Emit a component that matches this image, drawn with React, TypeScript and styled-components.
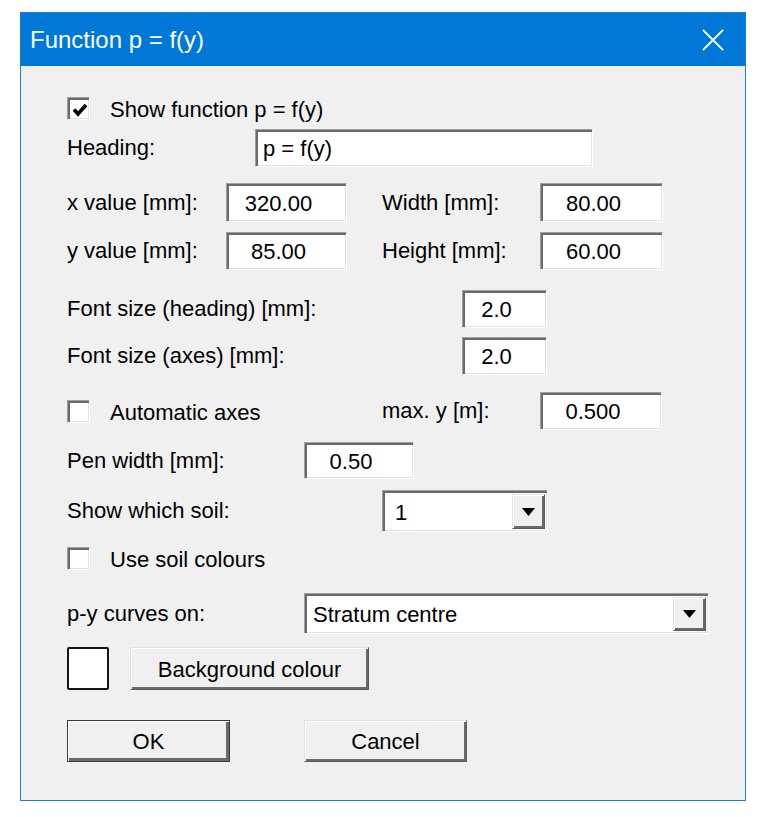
import styled, { createGlobalStyle } from 'styled-components';

const GlobalStyle = createGlobalStyle`
  body {
    margin: 0;
    background: #ffffff;
  }
`;

const Dialog = styled.div`
  width: 726px;
  height: 789px;
  margin: 12px 0 0 20px;
  box-sizing: border-box;
  border: 1px solid #1a7fd8;
  background: #f0f0f0;
  display: flex;
  flex-direction: column;
  font-family: 'Liberation Sans', Arial, sans-serif;
  color: #000;
`;

const TitleBar = styled.div`
  height: 53px;
  flex-shrink: 0;
  background: #0078d7;
  display: flex;
  align-items: center;
  justify-content: space-between;
  padding: 0 21px 0 9px;
  color: #fff;
  font-size: 24px;
`;

const CloseIcon = () => (
  <svg width="22" height="22" viewBox="0 0 22 22">
    <path d="M1 1 L21 21 M21 1 L1 21" stroke="#fff" strokeWidth="1.8" fill="none" />
  </svg>
);

const Body = styled.div`
  display: flex;
  flex-direction: column;
  padding-left: 46px;
`;

const Row = styled.div<{ $top: number; $h: number }>`
  display: flex;
  align-items: center;
  height: ${(p) => p.$h}px;
  margin-top: ${(p) => p.$top}px;
`;

const Label = styled.span<{ $w?: number }>`
  font-size: 22px;
  white-space: nowrap;
  flex-shrink: 0;
  width: ${(p) => (p.$w ? `${p.$w}px` : 'auto')};
`;

// classic 3D sunken edge used by edit fields, check boxes and combo boxes
const sunken = `
  box-sizing: border-box;
  background: #fff;
  border: 1px solid;
  border-color: #a0a0a0 #ffffff #ffffff #a0a0a0;
  box-shadow: inset 2px 2px 0 #6a6a6a, inset -1px -1px 0 #e3e3e3;
`;

const raised = `
  border: 1px solid;
  border-color: #e3e3e3 #5a5a5a #5a5a5a #e3e3e3;
  box-shadow: inset 1px 1px 0 #fff, inset -2px -2px 0 #6a6a6a;
`;

const TextBox = styled.input<{ $w: number; $left?: boolean }>`
  ${sunken}
  width: ${(p) => p.$w}px;
  height: 100%;
  margin: 0;
  padding: ${(p) => (p.$left ? '2px 0 0 7px' : '2px 16px 0 0')};
  text-align: ${(p) => (p.$left ? 'left' : 'center')};
  font-family: inherit;
  font-size: 22px;
  color: #000;
  outline: none;
  flex-shrink: 0;
`;

const Gap = styled.span<{ $w: number }>`
  width: ${(p) => p.$w}px;
  flex-shrink: 0;
`;

const CheckBox = styled.span`
  ${sunken}
  width: 23px;
  height: 23px;
  flex-shrink: 0;
  display: flex;
  align-items: center;
  justify-content: center;
  padding: 2px 0 0 2px;
  margin-right: 20px;
`;

const CheckField = styled.div<{ $w?: number }>`
  display: flex;
  align-items: center;
  flex-shrink: 0;
  width: ${(p) => (p.$w ? `${p.$w}px` : 'auto')};
`;

const CheckText = styled(Label)`
  padding-top: 3px;
`;

const Check = ({ checked, label, w }: { checked?: boolean; label: string; w?: number }) => (
  <CheckField $w={w}>
    <CheckBox>
      {checked && (
        <svg width="16" height="16" viewBox="0 0 16 16">
          <polyline points="2,7.5 6,12 14,3" stroke="#000" strokeWidth="3.6" fill="none" />
        </svg>
      )}
    </CheckBox>
    <CheckText>{label}</CheckText>
  </CheckField>
);

const ComboBox = styled.div<{ $w: number; $pad: number }>`
  ${sunken}
  width: ${(p) => p.$w}px;
  height: 100%;
  display: flex;
  align-items: stretch;
  padding: 3px 2px 2px ${(p) => p.$pad}px;
  font-size: 22px;
  flex-shrink: 0;
`;

const ComboValue = styled.span`
  flex: 1;
  display: flex;
  align-items: center;
  padding-top: 2px;
`;

const ArrowButton = styled.span`
  ${raised}
  width: 33px;
  box-sizing: border-box;
  background: #f0f0f0;
  display: flex;
  align-items: center;
  justify-content: center;
`;

const Combo = ({ value, w, pad }: { value: string; w: number; pad: number }) => (
  <ComboBox $w={w} $pad={pad}>
    <ComboValue>{value}</ComboValue>
    <ArrowButton>
      <svg width="13" height="8" viewBox="0 0 13 8">
        <polygon points="0,0 13,0 6.5,8" fill="#000" />
      </svg>
    </ArrowButton>
  </ComboBox>
);

const Swatch = styled.span`
  width: 42px;
  height: 43px;
  box-sizing: border-box;
  background: #fff;
  border: 2px solid #141414;
  border-radius: 2px;
  flex-shrink: 0;
`;

const Button = styled.button<{ $w: number; $default?: boolean }>`
  ${raised}
  width: ${(p) => p.$w}px;
  height: 100%;
  box-sizing: border-box;
  margin: 0;
  padding: 2px 0 0;
  background: #f0f0f0;
  font-family: inherit;
  font-size: 22px;
  color: #000;
  flex-shrink: 0;
  ${(p) =>
    p.$default &&
    `
    border-color: #3c3c3c;
    box-shadow: inset 1px 1px 0 #fff, inset -3px -3px 0 #6a6a6a;
  `}
`;

export default function App() {
  return (
    <>
      <GlobalStyle />
      <Dialog>
        <TitleBar>
          <span>Function p = f(y)</span>
          <CloseIcon />
        </TitleBar>
        <Body>
          <Row $top={31} $h={23}>
            <Check checked label="Show function p = f(y)" />
          </Row>
          <Row $top={9} $h={38}>
            <Label $w={188}>Heading:</Label>
            <TextBox $w={338} $left readOnly defaultValue="p = f(y)" />
          </Row>
          <Row $top={16} $h={39}>
            <Label $w={159}>x value [mm]:</Label>
            <TextBox $w={121} readOnly defaultValue="320.00" />
            <Gap $w={35} />
            <Label $w={158}>Width [mm]:</Label>
            <TextBox $w={123} readOnly defaultValue="80.00" />
          </Row>
          <Row $top={10} $h={38}>
            <Label $w={159}>y value [mm]:</Label>
            <TextBox $w={121} readOnly defaultValue="85.00" />
            <Gap $w={35} />
            <Label $w={158}>Height [mm]:</Label>
            <TextBox $w={123} readOnly defaultValue="60.00" />
          </Row>
          <Row $top={20} $h={38}>
            <Label $w={395}>Font size (heading) [mm]:</Label>
            <TextBox $w={85} readOnly defaultValue="2.0" />
          </Row>
          <Row $top={9} $h={38}>
            <Label $w={395}>Font size (axes) [mm]:</Label>
            <TextBox $w={85} readOnly defaultValue="2.0" />
          </Row>
          <Row $top={17} $h={38}>
            <Check label="Automatic axes" w={315} />
            <Label $w={158}>max. y [m]:</Label>
            <TextBox $w={122} readOnly defaultValue="0.500" />
          </Row>
          <Row $top={12} $h={37}>
            <Label $w={237}>Pen width [mm]:</Label>
            <TextBox $w={110} readOnly defaultValue="0.50" />
          </Row>
          <Row $top={11} $h={42}>
            <Label $w={315}>Show which soil:</Label>
            <Combo value="1" w={166} pad={12} />
          </Row>
          <Row $top={15} $h={23}>
            <Check label="Use soil colours" />
          </Row>
          <Row $top={23} $h={41}>
            <Label $w={237}>p-y curves on:</Label>
            <Combo value="Stratum centre" w={405} pad={8} />
          </Row>
          <Row $top={13} $h={43}>
            <Swatch />
            <Gap $w={21} />
            <Button $w={239}>Background colour</Button>
          </Row>
          <Row $top={30} $h={42}>
            <Button $w={163} $default>
              OK
            </Button>
            <Gap $w={74} />
            <Button $w={163}>Cancel</Button>
          </Row>
        </Body>
      </Dialog>
    </>
  );
}
